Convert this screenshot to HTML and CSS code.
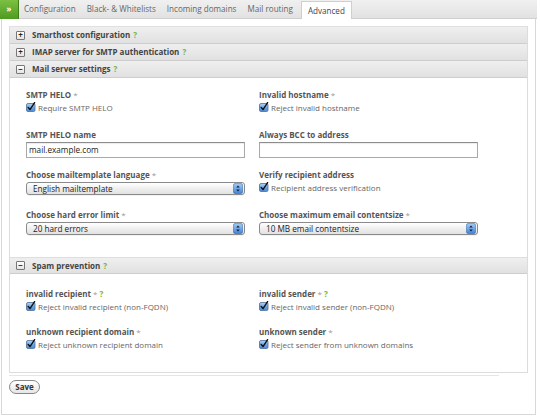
FILE: index.html
```html
<!DOCTYPE html>
<html>
<head>
<meta charset="utf-8">
<link rel="stylesheet" href="styles.css">
</head>
<body>
<svg class="defs" width="0" height="0">
  <defs>
    <linearGradient id="cbg" x1="0" y1="0" x2="0" y2="1">
      <stop offset="0" stop-color="#b7d4f3"/>
      <stop offset="0.5" stop-color="#6ea6e4"/>
      <stop offset="1" stop-color="#4a8bd8"/>
    </linearGradient>
    <linearGradient id="stg" x1="0" y1="0" x2="0" y2="1">
      <stop offset="0" stop-color="#a9ccf2"/>
      <stop offset="1" stop-color="#3f82d6"/>
    </linearGradient>
    <symbol id="cb" viewBox="0 0 10 10">
      <rect x="0.5" y="1.5" width="8.5" height="8" rx="1.5" fill="url(#cbg)" stroke="#4d6f98" stroke-width="0.8"/>
      <path d="M2.2 5.4 L4 7.6 L8.6 0.6" fill="none" stroke="#111" stroke-width="1.4" stroke-linecap="round" stroke-linejoin="round"/>
    </symbol>
    <symbol id="st" viewBox="0 0 10 11">
      <rect x="0.3" y="0.3" width="9.4" height="10.4" rx="2.5" fill="url(#stg)" stroke="#3b6cad" stroke-width="0.6"/>
      <path d="M3.2 4.4 L5 2.4 L6.8 4.4 Z M3.2 6.6 L5 8.6 L6.8 6.6 Z" fill="#0d2240"/>
    </symbol>
  </defs>
</svg>

<div class="tabs">
  <div class="home">&raquo;</div>
  <div class="tab first">Configuration</div>
  <div class="tab">Black- &amp; Whitelists</div>
  <div class="tab">Incoming domains</div>
  <div class="tab">Mail routing</div>
  <div class="tab active">Advanced</div>
</div>

<div class="frame">
  <div class="panel">
    <div class="head"><span class="tog">+</span>Smarthost configuration <span class="q">?</span></div>
    <div class="head"><span class="tog">+</span>IMAP server for SMTP authentication <span class="q">?</span></div>
    <div class="head"><span class="tog">&minus;</span>Mail server settings <span class="q">?</span></div>
    <div class="body grid-a">
      <div class="field">
        <div class="lbl">SMTP HELO <span class="star">*</span></div>
        <label class="chk"><svg class="cbx"><use href="#cb"/></svg>Require SMTP HELO</label>
      </div>
      <div class="field">
        <div class="lbl">Invalid hostname <span class="star">*</span></div>
        <label class="chk"><svg class="cbx"><use href="#cb"/></svg>Reject invalid hostname</label>
      </div>
      <div class="field">
        <div class="lbl">SMTP HELO name</div>
        <div class="input">mail.example.com</div>
      </div>
      <div class="field">
        <div class="lbl">Always BCC to address</div>
        <div class="input"></div>
      </div>
      <div class="field">
        <div class="lbl">Choose mailtemplate language <span class="star">*</span></div>
        <div class="select"><span>English mailtemplate</span><svg class="step"><use href="#st"/></svg></div>
      </div>
      <div class="field">
        <div class="lbl">Verify recipient address</div>
        <label class="chk"><svg class="cbx"><use href="#cb"/></svg>Recipient address verification</label>
      </div>
      <div class="field">
        <div class="lbl">Choose hard error limit <span class="star">*</span></div>
        <div class="select"><span>20 hard errors</span><svg class="step"><use href="#st"/></svg></div>
      </div>
      <div class="field">
        <div class="lbl">Choose maximum email contentsize <span class="star">*</span></div>
        <div class="select"><span>10 MB email contentsize</span><svg class="step"><use href="#st"/></svg></div>
      </div>
    </div>
    <div class="head top"><span class="tog">&minus;</span>Spam prevention <span class="q">?</span></div>
    <div class="body grid-b">
      <div class="field">
        <div class="lbl">invalid recipient <span class="star">*</span> <span class="q">?</span></div>
        <label class="chk"><svg class="cbx"><use href="#cb"/></svg>Reject invalid recipient (non-FQDN)</label>
      </div>
      <div class="field">
        <div class="lbl">invalid sender <span class="star">*</span> <span class="q">?</span></div>
        <label class="chk"><svg class="cbx"><use href="#cb"/></svg>Reject invalid sender (non-FQDN)</label>
      </div>
      <div class="field">
        <div class="lbl">unknown recipient domain <span class="star">*</span></div>
        <label class="chk"><svg class="cbx"><use href="#cb"/></svg>Reject unknown recipient domain</label>
      </div>
      <div class="field">
        <div class="lbl">unknown sender <span class="star">*</span></div>
        <label class="chk"><svg class="cbx"><use href="#cb"/></svg>Reject sender from unknown domains</label>
      </div>
    </div>
  </div>
  <div class="rule"></div>
  <button class="save">Save</button>
</div>
</body>
</html>
```
FILE: styles.css
```css
* { box-sizing: border-box; }
html, body { margin: 0; padding: 0; background: #fff; }
body {
  width: 540px;
  height: 417px;
  font-family: "Open Sans", "Liberation Sans", sans-serif;
  font-size: 8px;
  color: #555;
  overflow: hidden;
}
.defs { position: absolute; width: 0; height: 0; }

.tabs {
  display: flex;
  align-items: flex-end;
  width: 537px;
  height: 19px;
  background: linear-gradient(#f0f0f0, #e2e2e2);
  border-bottom: 1px solid #cfcfcf;
}
.home {
  width: 19px;
  height: 19px;
  align-self: flex-start;
  background: linear-gradient(#7cc043, #4f9a21);
  color: #fff;
  font-weight: bold;
  font-size: 8px;
  line-height: 17px;
  text-align: center;
  border-right: 1px solid #3f7d18;
  margin-bottom: -1px;
}
.tab {
  height: 18px;
  line-height: 17px;
  padding: 0 5px;
  margin-left: 1px;
  font-size: 8.1px;
  color: #666;
}
.tab.first { margin-left: 0; }
.tab.active {
  background: #fff;
  border: 1px solid #cfcfcf;
  border-bottom: none;
  height: 18px;
  margin-bottom: -1px;
  margin-left: 3px;
  padding: 0 6px;
  color: #444;
}

.frame {
  margin-left: 1px;
  width: 535px;
  height: 396px;
  border: 1px solid #d8d8d8;
  border-top: none;
  padding: 7px 7px 0 7px;
}
.panel {
  border: 1px solid #dcdcdc;
  border-top-color: #e0e0e0;
}
.head {
  height: 17px;
  line-height: 16px;
  background: linear-gradient(#efefef, #e1e1e1);
  border-bottom: 1px solid #cdcdcd;
  padding-left: 6px;
  font-weight: bold;
  color: #444;
  display: flex;
  align-items: center;
}
.head.top { border-top: 1px solid #dedede; }
.tog {
  width: 9px;
  height: 9px;
  border: 1px solid #777;
  border-radius: 1px;
  background: linear-gradient(#fff, #e4e4e4);
  font-size: 8px;
  line-height: 6px;
  text-align: center;
  color: #222;
  margin-right: 7px;
  font-weight: bold;
}
.q { color: #7ab23c; font-weight: bold; margin-left: 3px; }
.star { color: #999; font-weight: normal; }

.body {
  display: grid;
  grid-template-columns: 233px 233px;
  padding-left: 16px;
}
.grid-a { grid-auto-rows: 40px; padding-top: 11px; padding-bottom: 8px; }
.grid-b { grid-auto-rows: 38px; padding-top: 14px; padding-bottom: 8px; }

.lbl {
  height: 12px;
  line-height: 12px;
  font-weight: bold;
  color: #555;
}
.lbl .q { margin-left: 0; }
.chk {
  display: flex;
  align-items: center;
  height: 12px;
  color: #666;
}
.cbx { width: 10px; height: 10px; margin-right: 2px; flex: none; }

.input {
  margin-top: 1px;
  width: 219px;
  height: 16px;
  border: 1px solid #a9a9a9;
  border-top-color: #8d8d8d;
  box-shadow: inset 0 1px 1px rgba(0,0,0,0.08);
  padding-left: 2px;
  line-height: 14px;
  font-size: 8.2px;
  color: #222;
}
.select {
  margin-top: 1px;
  width: 219px;
  height: 13px;
  border: 1px solid #8a8a8a;
  border-radius: 3px;
  background: linear-gradient(#ffffff, #ececec 60%, #e2e2e2);
  display: flex;
  align-items: center;
  justify-content: space-between;
  padding: 0 1px 0 6px;
  font-size: 8.2px;
  color: #222;
  box-shadow: 0 1px 0 rgba(0,0,0,0.05);
}
.select span { line-height: 11px; }
.step { width: 10px; height: 11px; flex: none; }

.rule {
  margin-top: 2px;
  width: 490px;
  height: 1px;
  background: #e6e6e6;
}
.save {
  display: block;
  margin-top: 4px;
  width: 31px;
  height: 14px;
  padding: 0;
  border: 1px solid #888;
  border-radius: 7px;
  background: linear-gradient(#ffffff, #e6e6e6);
  font-family: "Open Sans", "Liberation Sans", sans-serif;
  font-size: 8px;
  font-weight: bold;
  color: #333;
  line-height: 12px;
}
```
